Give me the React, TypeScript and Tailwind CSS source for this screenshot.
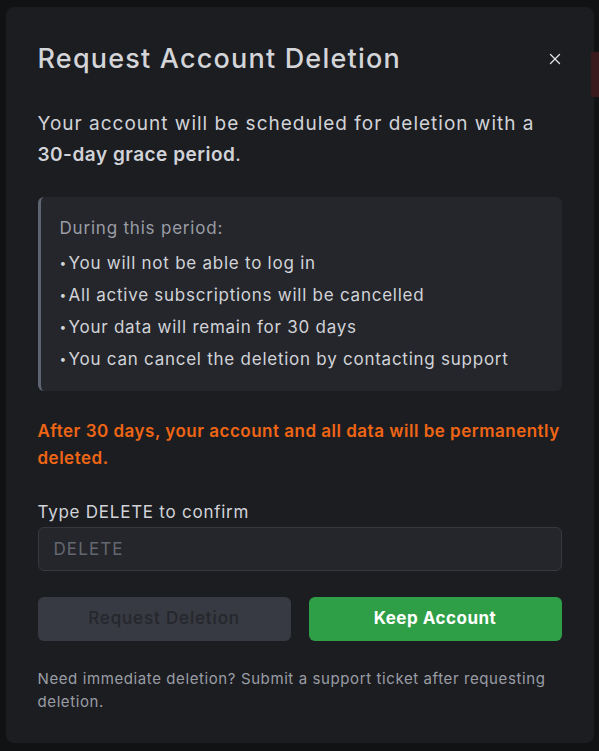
import { X } from "lucide-react";

const bullets = [
  "You will not be able to log in",
  "All active subscriptions will be cancelled",
  "Your data will remain for 30 days",
  "You can cancel the deletion by contacting support",
];

function DeleteAccountModal() {
  return (
    <div className="w-[588px] mx-auto mt-[7px] bg-[#1c1d21] rounded-lg px-8 pt-[32px] pb-[30px]">
      <div className="flex items-center justify-between">
        <h2 className="text-[27px] leading-[40px] font-medium text-[#d4d5d9] tracking-[1.2px]">
          Request Account Deletion
        </h2>
        <button className="text-[#e4e4e7] mr-[-2px]">
          <X size={18} strokeWidth={1.75} />
        </button>
      </div>

      <p className="mt-[29px] text-[19px] leading-[31px] tracking-[1px] text-[#d1d3d8]">
        Your account will be scheduled for deletion with a{" "}
        <span className="font-semibold tracking-[0.5px]">30-day grace period</span>.
      </p>

      <div className="mt-[27px] bg-[#25262b] border-l-[3px] border-[#5f6570] rounded-md px-[19px] pt-[18px] pb-[16px]">
        <p className="text-[17px] leading-[26px] tracking-[0.8px] text-[#9a9da5]">During this period:</p>
        <ul className="mt-[6px] flex flex-col text-[17px] leading-[32px] tracking-[0.75px] text-[#d1d3d8]">
          {bullets.map((b) => (
            <li key={b} className="flex">
              <span className="w-[9px] shrink-0 text-[12px]">•</span>
              <span>{b}</span>
            </li>
          ))}
        </ul>
      </div>

      <p className="mt-[27px] text-[17px] leading-[27px] font-semibold tracking-[0.5px] text-[#ee6515]">
        After 30 days, your account and all data will be permanently deleted.
      </p>

      <label className="block mt-[28px] text-[17px] leading-[24px] tracking-[0.75px] text-[#d1d3d8]">
        Type DELETE to confirm
      </label>
      <input
        placeholder="DELETE"
        className="mt-[3px] w-full h-[44px] px-[15px] bg-[#25262b] border border-[#36383e] rounded-md text-[17px] tracking-[1.1px] text-[#d1d3d8] placeholder:text-[#64676f] outline-none"
      />

      <div className="mt-[26px] grid grid-cols-2 gap-[18px]">
        <button className="h-[44px] rounded-md bg-[#373a42] text-[17px] font-medium tracking-[0.85px] text-[#25272c]">
          Request Deletion
        </button>
        <button className="h-[44px] rounded-md bg-[#2f9f47] text-[17px] font-bold tracking-[0.5px] text-white">
          Keep Account
        </button>
      </div>

      <p className="mt-[26px] text-[15px] leading-[23px] tracking-[0.6px] text-[#9a9da5]">
        Need immediate deletion? Submit a support ticket after requesting deletion.
      </p>
    </div>
  );
}

export default function App() {
  return (
    <div
      className="min-h-[751px] bg-[#111214] relative overflow-hidden pb-2"
      style={{ fontFamily: "Inter, 'Noto Sans', sans-serif" }}
    >
      <div className="absolute right-0 top-[52px] w-[8px] h-[45px] bg-[#3a1a1c]" />
      <DeleteAccountModal />
    </div>
  );
}
